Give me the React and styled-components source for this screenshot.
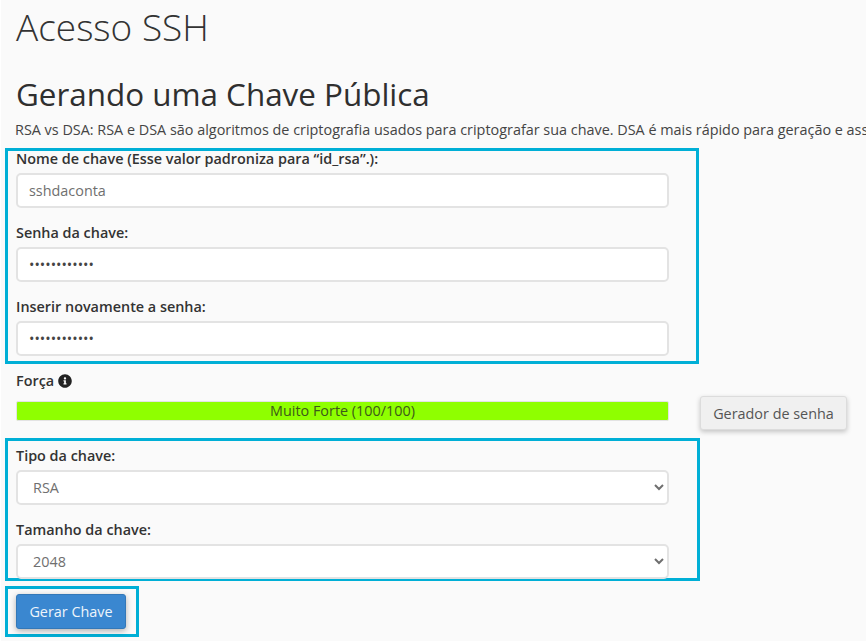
import React from "react";
import styled, { createGlobalStyle } from "styled-components";
import { FaInfoCircle } from "react-icons/fa";

const GlobalStyle = createGlobalStyle`
  html, body {
    margin: 0;
    padding: 0;
    height: 100%;
    overflow: hidden;
    background: #fafafa;
  }
  body {
    font-family: "Open Sans", "Liberation Sans", sans-serif;
    color: #333;
  }
  * { box-sizing: border-box; }
`;

const Page = styled.div`
  width: 867px;
  height: 641px;
  overflow: hidden;
  padding: 0 0 0 4px;
  border-left: 1px solid #fff;
  border-right: 1px solid #fff;
`;

const Title = styled.h1`
  margin: 0;
  padding: 4px 0 0 11px;
  height: 70px;
  font-size: 37px;
  line-height: 46px;
  font-weight: 300;
  color: #333;
`;

const SubTitle = styled.h2`
  margin: 0;
  padding-left: 11px;
  height: 49px;
  font-size: 31.4px;
  line-height: 48px;
  font-weight: 400;
  color: #2f2f2f;
`;

const Intro = styled.p`
  margin: 0;
  padding-left: 10px;
  height: 29px;
  width: 862px;
  font-size: 14.4px;
  line-height: 22px;
  white-space: nowrap;
  overflow: hidden;
  color: #444;
`;

const Highlight = styled.div`
  width: ${(p) => p.$width}px;
  height: ${(p) => p.$height}px;
  margin-top: ${(p) => p.$top || 0}px;
  border: 3px solid #00afd6;
  padding: ${(p) => p.$padding};
`;

const Field = styled.div`
  display: flex;
  flex-direction: column;
  margin-top: ${(p) => (p.$first ? 0 : 17)}px;
`;

const Label = styled.label`
  display: flex;
  align-items: center;
  gap: 4px;
  height: 14px;
  padding-top: 2px;
  margin-bottom: 8px;
  font-size: 14.4px;
  line-height: 14px;
  font-weight: 600;
  color: #333;
`;

const TextInput = styled.input`
  width: 653px;
  height: 35px;
  padding: 0 11px;
  border: 2px solid #e3e3e3;
  border-radius: 5px;
  background: #fff;
  outline: none;
  font-family: inherit;
  font-size: 14.4px;
  color: ${(p) => (p.type === "password" ? "#444" : "#6f6f6f")};
`;

const Select = styled.select`
  width: 653px;
  height: 35px;
  padding: 0 11px;
  border: 2px solid #e3e3e3;
  border-radius: 5px;
  background: #fff;
  outline: none;
  font-family: inherit;
  font-size: 14.4px;
  color: #6f6f6f;
`;

const StrengthBlock = styled.div`
  height: 74px;
  padding: 9px 0 0 11px;
`;

const StrengthRow = styled.div`
  display: flex;
  align-items: flex-start;
  margin-top: 14px;
`;

const Meter = styled.div`
  width: 653px;
  height: 20px;
  border: 1px solid #e3e3e3;
  border-radius: 2px;
  background: #8fff00;
  text-align: center;
  font-size: 14.4px;
  line-height: 18px;
  color: #3d5a1a;
`;

const GhostButton = styled.button`
  width: 147px;
  height: 34px;
  margin: -5px 0 0 31px;
  padding: 0;
  border: 1px solid #dcdcdc;
  border-radius: 3px;
  background: #f0f0f0;
  box-shadow: 0 2px 5px rgba(0, 0, 0, 0.22);
  font-family: inherit;
  font-size: 14.4px;
  color: #555;
`;

const PrimaryButton = styled.button`
  display: block;
  width: 110px;
  height: 35px;
  padding: 0;
  border: 1px solid #3378b8;
  border-radius: 3px;
  background: #3a87d0;
  box-shadow: 0 2px 6px rgba(0, 0, 0, 0.3);
  font-family: inherit;
  font-size: 14.4px;
  color: #eef5fb;
`;

export default function App() {
  return (
    <Page>
      <GlobalStyle />
      <Title>Acesso SSH</Title>
      <SubTitle>Gerando uma Chave Pública</SubTitle>
      <Intro>
        RSA vs DSA: RSA e DSA são algoritmos de criptografia usados para criptografar sua chave. DSA é mais rápido para geração e assinatura.
      </Intro>

      <Highlight $width={694} $height={216} $padding="0 0 0 8px">
        <Field $first>
          <Label>Nome de chave (Esse valor padroniza para “id_rsa”.):</Label>
          <TextInput defaultValue="sshdaconta" />
        </Field>
        <Field>
          <Label>Senha da chave:</Label>
          <TextInput type="password" defaultValue="senhadachave" />
        </Field>
        <Field>
          <Label>Inserir novamente a senha:</Label>
          <TextInput type="password" defaultValue="senhadachave" />
        </Field>
      </Highlight>

      <StrengthBlock>
        <Label>
          Força <FaInfoCircle size={14} color="#222" />
        </Label>
        <StrengthRow>
          <Meter>Muito Forte (100/100)</Meter>
          <GhostButton type="button">Gerador de senha</GhostButton>
        </StrengthRow>
      </StrengthBlock>

      <Highlight $width={695} $height={143} $padding="7px 0 0 8px">
        <Field $first>
          <Label>Tipo da chave:</Label>
          <Select defaultValue="RSA">
            <option>RSA</option>
            <option>DSA</option>
          </Select>
        </Field>
        <Field>
          <Label>Tamanho da chave:</Label>
          <Select defaultValue="2048">
            <option>2048</option>
            <option>4096</option>
          </Select>
        </Field>
      </Highlight>

      <Highlight $width={134} $height={51} $top={5} $padding="5px 0 0 8px">
        <PrimaryButton type="button">Gerar Chave</PrimaryButton>
      </Highlight>
    </Page>
  );
}
